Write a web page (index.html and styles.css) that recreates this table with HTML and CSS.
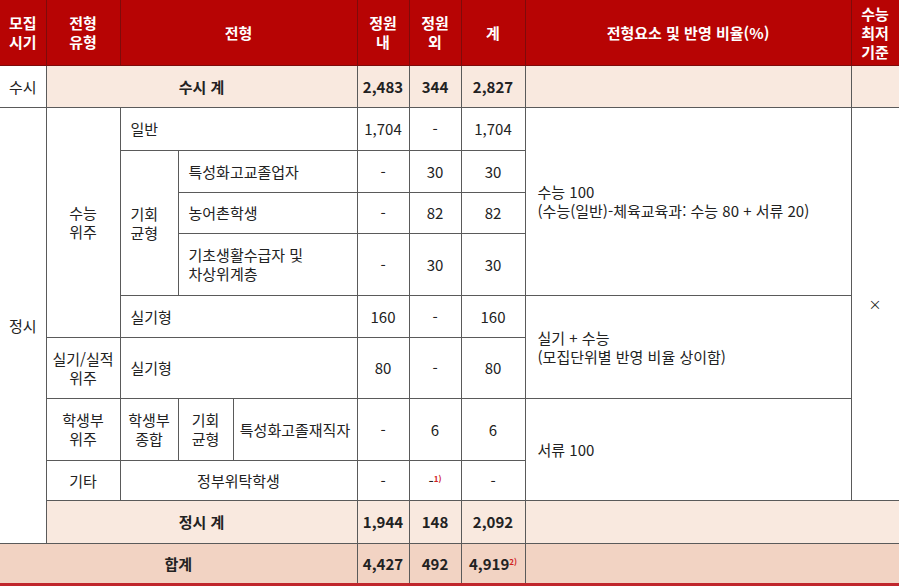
FILE: index.html
```html
<!DOCTYPE html>
<html lang="ko">
<head>
<meta charset="utf-8">
<link rel="stylesheet" href="styles.css">
</head>
<body>
<table class="adm">
  <colgroup>
    <col class="c1"><col class="c2"><col class="c3"><col class="c4"><col class="c5">
    <col class="c6"><col class="c7"><col class="c8"><col class="c9"><col class="c10">
  </colgroup>
  <thead>
    <tr class="h-head">
      <th>모집<br>시기</th>
      <th>전형<br>유형</th>
      <th colspan="3">전형</th>
      <th>정원<br>내</th>
      <th>정원<br>외</th>
      <th>계</th>
      <th>전형요소 및 반영 비율(%)</th>
      <th>수능<br>최저<br>기준</th>
    </tr>
  </thead>
  <tbody>
    <tr class="h-42">
      <td class="white">수시</td>
      <td colspan="4" class="sum b">수시 계</td>
      <td class="sum b">2,483</td>
      <td class="sum b">344</td>
      <td class="sum b">2,827</td>
      <td class="sum"></td>
      <td class="sum"></td>
    </tr>
    <tr class="h-43">
      <td rowspan="9">정시</td>
      <td rowspan="5">수능<br>위주</td>
      <td colspan="3" class="left">일반</td>
      <td>1,704</td>
      <td>-</td>
      <td>1,704</td>
      <td rowspan="4" class="left wide">수능 100<br>(수능(일반)-체육교육과: 수능 80 + 서류 20)</td>
      <td rowspan="8" class="last x">×</td>
    </tr>
    <tr class="h-42">
      <td rowspan="3" class="left">기회<br>균형</td>
      <td colspan="2" class="left">특성화고교졸업자</td>
      <td>-</td>
      <td>30</td>
      <td>30</td>
    </tr>
    <tr class="h-41">
      <td colspan="2" class="left">농어촌학생</td>
      <td>-</td>
      <td>82</td>
      <td>82</td>
    </tr>
    <tr class="h-62">
      <td colspan="2" class="left">기초생활수급자 및<br>차상위계층</td>
      <td>-</td>
      <td>30</td>
      <td>30</td>
    </tr>
    <tr class="h-42">
      <td colspan="3" class="left">실기형</td>
      <td>160</td>
      <td>-</td>
      <td>160</td>
      <td rowspan="2" class="left wide">실기 + 수능<br>(모집단위별 반영 비율 상이함)</td>
    </tr>
    <tr class="h-61">
      <td>실기/실적<br>위주</td>
      <td colspan="3" class="left">실기형</td>
      <td>80</td>
      <td>-</td>
      <td>80</td>
    </tr>
    <tr class="h-62">
      <td>학생부<br>위주</td>
      <td>학생부<br>종합</td>
      <td>기회<br>균형</td>
      <td>특성화고졸재직자</td>
      <td>-</td>
      <td>6</td>
      <td>6</td>
      <td rowspan="2" class="left wide">서류 100</td>
    </tr>
    <tr class="h-40">
      <td>기타</td>
      <td colspan="3">정부위탁학생</td>
      <td>-</td>
      <td>-<sup class="note">1)</sup></td>
      <td>-</td>
    </tr>
    <tr class="h-43">
      <td colspan="4" class="sum b">정시 계</td>
      <td class="sum b">1,944</td>
      <td class="sum b">148</td>
      <td class="sum b">2,092</td>
      <td colspan="2" class="sum"></td>
    </tr>
  </tbody>
  <tfoot>
    <tr class="h-total">
      <td colspan="5" class="total b">합계</td>
      <td class="total b">4,427</td>
      <td class="total b">492</td>
      <td class="total b">4,919<sup class="note">2)</sup></td>
      <td colspan="2" class="total"></td>
    </tr>
  </tfoot>
</table>
</body>
</html>
```

FILE: styles.css
```css
html, body {
  margin: 0;
  padding: 0;
  background: #ffffff;
}

body {
  font-family: "Noto Sans CJK KR", "Noto Sans", sans-serif;
  font-size: 15px;
  color: #222222;
}

.adm {
  width: 899px;
  table-layout: fixed;
  border-collapse: collapse;
}

.c1 { width: 46px; }
.c2 { width: 74px; }
.c3 { width: 58px; }
.c4 { width: 55px; }
.c5 { width: 124px; }
.c6 { width: 52px; }
.c7 { width: 52px; }
.c8 { width: 64px; }
.c9 { width: 326px; }
.c10 { width: 48px; }

.adm th,
.adm td {
  padding: 0;
  text-align: center;
  vertical-align: middle;
  line-height: 19px;
  border: 1px solid #5a5a5a;
  overflow: hidden;
  white-space: nowrap;
}

.adm th {
  background: #b70404;
  color: #ffffff;
  font-weight: 700;
  border-color: #7e0b0b;
  border-top: none;
  line-height: 19px;
}

.adm th:first-child,
.adm tr > td:first-child {
  border-left: none;
}

.h-head { height: 65px; }
.h-40 { height: 40px; }
.h-41 { height: 41px; }
.h-42 { height: 42px; }
.h-43 { height: 43px; }
.h-61 { height: 61px; }
.h-62 { height: 62px; }
.h-total { height: 41px; }

.left {
  text-align: left !important;
  padding-left: 10px !important;
}

.wide {
  padding-left: 12px !important;
}

.b { font-weight: 700; }

.sum { background: #f9e9df; }
.total {
  background: #f2d3c3;
  border-bottom: 3px solid #c0262c !important;
}
.white { background: #ffffff; }

.last { border-right: 1px solid #5a5a5a; }

.x {
  font-size: 13px;
}

.note {
  color: #d0201e;
  font-size: 8px;
  font-weight: 700;
  line-height: 10px;
  vertical-align: 5px;
}
```
